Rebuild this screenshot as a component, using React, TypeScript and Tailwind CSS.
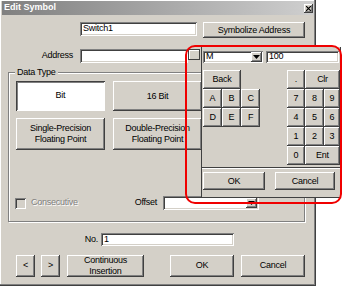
import React from "react";

const RAISED =
  "bg-[#d4d0c8] shadow-[inset_-1px_-1px_#404040,inset_1px_1px_#ffffff,inset_-2px_-2px_#808080]";
const SUNKEN =
  "bg-white shadow-[inset_1px_1px_#808080,inset_-1px_-1px_#ffffff,inset_2px_2px_#404040,inset_-2px_-2px_#d4d0c8]";

function Btn({ className = "", children }: { className?: string; children?: React.ReactNode }) {
  return (
    <div className={`flex shrink-0 items-center justify-center text-center leading-[11px] ${RAISED} ${className}`}>
      {children}
    </div>
  );
}

function Key({ className = "", children }: { className?: string; children?: React.ReactNode }) {
  return (
    <div className={`flex items-center justify-center leading-[11px] ${RAISED} ${className}`}>{children}</div>
  );
}

function Arrow() {
  return (
    <div className={`flex h-full w-[11px] items-center justify-center ${RAISED}`}>
      <svg width="7" height="4" viewBox="0 0 7 4">
        <path d="M0 0h7L3.5 4z" fill="#000" />
      </svg>
    </div>
  );
}

export default function App() {
  return (
    <div className="relative h-[287px] w-[343px] overflow-hidden bg-white font-['Liberation_Sans',Arial,sans-serif] text-[9px] tracking-[-0.25px] text-black">
      {/* dialog */}
      <div className="flex h-[286px] w-[316px] flex-col bg-[#d4d0c8] shadow-[inset_-1px_-1px_#404040,inset_-2px_-2px_#808080,inset_1px_1px_#ffffff]">
        {/* title bar */}
        <div className="mx-[2px] mt-[1px] flex h-[14px] items-center justify-between bg-gradient-to-r from-[#808080] to-[#cfcfcf] pl-[2px] pr-[1px]">
          <span className="text-[9px] font-bold tracking-normal text-white">Edit Symbol</span>
          <div className={`flex h-[9px] w-[9px] items-center justify-center ${RAISED}`}>
            <svg width="5" height="5" viewBox="0 0 5 5">
              <path d="M0 0L5 5M5 0L0 5" stroke="#000" strokeWidth="1.2" />
            </svg>
          </div>
        </div>

        {/* name row */}
        <div className="mt-[7px] flex items-start gap-[6px] pl-[80px]">
          <div className={`flex h-[14px] w-[117px] items-center pl-[3px] ${SUNKEN}`}>Switch1</div>
          <Btn className="h-[16px] w-[102px]">Symbolize Address</Btn>
        </div>

        {/* address row */}
        <div className="mt-[11px] flex items-start">
          <div className="flex h-[14px] w-[73px] items-center justify-end">Address</div>
          <div className={`ml-[7px] h-[14px] w-[108px] ${SUNKEN}`} />
          <div className="h-[11px] w-[12px] border border-[#404040] bg-[#d4d0c8] shadow-[inset_1px_1px_#ffffff]" />
        </div>

        {/* Data Type group */}
        <div className="ml-[8px] mt-[9px] flex h-[150px] w-[297px] flex-col border border-[#808080] shadow-[inset_1px_1px_#ffffff,1px_1px_#ffffff]">
          <span className="-mt-[6px] ml-[6px] self-start bg-[#d4d0c8] px-[2px] leading-[11px]">Data Type</span>
          <div className="mt-[3px] flex gap-[8px] pl-[7px]">
            <div className="flex h-[30px] w-[89px] items-center justify-center bg-white shadow-[inset_1px_1px_#404040,inset_-1px_-1px_#ffffff,inset_2px_2px_#808080]">
              Bit
            </div>
            <Btn className="h-[30px] w-[89px]">16 Bit</Btn>
          </div>
          <div className="mt-[7px] flex gap-[8px] pl-[7px]">
            <Btn className="h-[32px] w-[89px]">
              Single-Precision
              <br />
              Floating Point
            </Btn>
            <Btn className="h-[32px] w-[89px]">
              Double-Precision
              <br />
              Floating Point
            </Btn>
          </div>
          <div className="mt-[46px] flex h-[14px] items-center pl-[6px]">
            <div className="h-[11px] w-[11px] bg-[#d4d0c8] shadow-[inset_1px_1px_#808080,inset_-1px_-1px_#ffffff,inset_2px_2px_#404040]" />
            <span className="ml-[5px] text-[#808080] [text-shadow:1px_1px_#ffffff]">Consecutive</span>
            <span className="ml-auto">Offset</span>
            <div className={`ml-[6px] mr-[45px] flex h-[14px] w-[96px] justify-end p-[2px] ${SUNKEN}`}>
              <Arrow />
            </div>
          </div>
        </div>

        {/* No. row */}
        <div className="mt-[11px] flex items-center">
          <div className="w-[98px] text-right">No.</div>
          <div className={`ml-[3px] flex h-[13px] w-[133px] items-center pl-[3px] ${SUNKEN}`}>1</div>
        </div>

        {/* bottom buttons */}
        <div className="mt-[8px] flex pl-[16px]">
          <Btn className="h-[22px] w-[19px]">&lt;</Btn>
          <Btn className="ml-[6px] h-[22px] w-[19px]">&gt;</Btn>
          <Btn className="ml-[7px] h-[22px] w-[77px]">
            Continuous
            <br />
            Insertion
          </Btn>
          <Btn className="ml-[26px] h-[22px] w-[64px]">OK</Btn>
          <Btn className="ml-[7px] h-[22px] w-[64px]">Cancel</Btn>
        </div>
      </div>

      {/* numeric input popup */}
      <div className="absolute left-[201px] top-[47px] flex h-[151px] w-[140px] flex-col border-x border-b border-[#404040] bg-[#d4d0c8] pt-[4px]">
        <div className="flex gap-[3px] pl-[1px]">
          <div className={`flex h-[12px] w-[60px] items-center justify-between p-[1px] pl-[3px] ${SUNKEN}`}>
            <span>M</span>
            <Arrow />
          </div>
          <div className={`flex h-[12px] w-[73px] items-center pl-[3px] ${SUNKEN}`}>100</div>
        </div>
        <div className="mt-[7px] grid grid-cols-[19px_19px_19px_27px_18px_19px_16px] grid-rows-[19px_19px_19px_19px_19px] pl-[1px]">
          <Key className="col-span-2 col-start-1 row-start-1">Back</Key>
          <Key className="col-start-1 row-start-2">A</Key>
          <Key className="col-start-2 row-start-2">B</Key>
          <Key className="col-start-3 row-start-2">C</Key>
          <Key className="col-start-1 row-start-3">D</Key>
          <Key className="col-start-2 row-start-3">E</Key>
          <Key className="col-start-3 row-start-3">F</Key>
          <Key className="col-start-5 row-start-1">.</Key>
          <Key className="col-span-2 col-start-6 row-start-1">Clr</Key>
          <Key className="col-start-5 row-start-2">7</Key>
          <Key className="col-start-6 row-start-2">8</Key>
          <Key className="col-start-7 row-start-2">9</Key>
          <Key className="col-start-5 row-start-3">4</Key>
          <Key className="col-start-6 row-start-3">5</Key>
          <Key className="col-start-7 row-start-3">6</Key>
          <Key className="col-start-5 row-start-4">1</Key>
          <Key className="col-start-6 row-start-4">2</Key>
          <Key className="col-start-7 row-start-4">3</Key>
          <Key className="col-start-5 row-start-5">0</Key>
          <Key className="col-span-2 col-start-6 row-start-5">Ent</Key>
        </div>
        <div className="mt-[2px] h-[2px] border-t border-b border-t-[#404040] border-b-white" />
        <div className="mt-[3px] flex gap-[10px] pl-[1px]">
          <Btn className="h-[18px] w-[62px]">OK</Btn>
          <Btn className="h-[18px] w-[60px]">Cancel</Btn>
        </div>
      </div>

      {/* red highlight annotation */}
      <div className="pointer-events-none absolute left-[185px] top-[45px] h-[159px] w-[157px] rounded-[10px] border-2 border-[#f00000]" />
    </div>
  );
}
